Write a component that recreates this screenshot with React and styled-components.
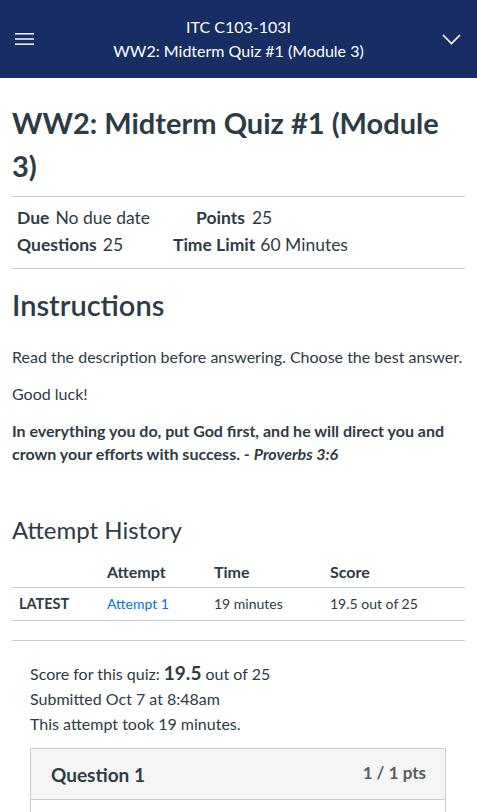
import React from "react";
import styled, { createGlobalStyle } from "styled-components";

const Global = createGlobalStyle`
  html, body { margin: 0; padding: 0; background: #fff; }
  body { font-family: Lato, "Noto Sans", sans-serif; color: #2d3b45; }
  * { box-sizing: border-box; }
`;

const TopBar = styled.header`
  height: 78px;
  background: #172d64;
  color: #fff;
  display: grid;
  grid-template-columns: 48px 1fr 48px;
  align-items: center;
`;

const IconBtn = styled.div`
  display: flex;
  align-items: center;
  justify-content: ${(p) => (p.$right ? "flex-end" : "flex-start")};
  padding: ${(p) => (p.$right ? "0 16px 0 0" : "0 0 0 15px")};
`;

const BarTitle = styled.div`
  text-align: center;
  font-size: 16px;
  line-height: 24px;
  padding-bottom: 1px;
`;

const Page = styled.main`
  padding: 0 12px;
`;

const Title = styled.h1`
  margin: 23px 0 9px;
  font-size: 29px;
  line-height: 43px;
  font-weight: 700;
`;

const Rule = styled.hr`
  border: 0;
  border-top: 1px solid #c7cdd1;
  margin: 0;
`;

const Details = styled.div`
  display: grid;
  grid-template-columns: 156px 1fr;
  row-gap: 3px;
  padding: 9px 5px 11px;
  font-size: 17.5px;
  line-height: 24px;
`;

const DetailItem = styled.div`
  display: flex;
  gap: ${(p) => p.$gap || 5}px;
  padding-left: ${(p) => p.$indent || 0}px;
`;

const DetailLabel = styled.span`
  font-weight: 700;
`;

const H2 = styled.h2`
  margin: 19px 0 23px;
  font-size: 29px;
  line-height: 34px;
  font-weight: 600;
`;

const P = styled.p`
  margin: 0 0 14px;
  font-size: 16px;
  line-height: 23px;
  font-weight: ${(p) => (p.$bold ? 700 : 400)};
`;

const H3 = styled.h3`
  margin: 50px 0 17px;
  font-size: 24px;
  line-height: 30px;
  font-weight: 400;
`;

const Table = styled.table`
  width: 100%;
  border-collapse: collapse;
  font-size: 14px;
`;

const Th = styled.th`
  text-align: left;
  font-size: 16px;
  line-height: 19px;
  font-weight: 700;
  padding: 0 0 6px;
  border-bottom: 1px solid #c7cdd1;
  width: ${(p) => p.$w || "auto"};
`;

const Td = styled.td`
  padding: 7px 0 8px;
  line-height: 17px;
  border-bottom: 1px solid #c7cdd1;
  padding-left: ${(p) => (p.$first ? "7px" : "0")};
  font-weight: ${(p) => (p.$bold ? 700 : 400)};
  font-size: ${(p) => (p.$bold ? "14.5px" : "14px")};
`;

const LinkText = styled.a`
  color: #0770e3;
  text-decoration: none;
`;

const EmptyRow = styled.div`
  height: 20px;
  border-bottom: 1px solid #c7cdd1;
`;

const Summary = styled.div`
  padding: 19px 30px 0;
  font-size: 16px;
  line-height: 25px;
`;

const Big = styled.strong`
  font-size: 19px;
`;

const QuestionBox = styled.section`
  margin: 12px 31px 0 30px;
  border: 1px solid #c7cdd1;
  border-bottom: 0;
`;

const QuestionHead = styled.div`
  background: #f5f5f5;
  border-bottom: 1px solid #c7cdd1;
  display: flex;
  justify-content: space-between;
  align-items: flex-start;
  padding: 14px 19px 0 20px;
  height: 51px;
`;

const QTitle = styled.span`
  font-size: 19px;
  line-height: 24px;
  font-weight: 700;
`;

const QPts = styled.span`
  font-size: 17px;
  line-height: 20px;
  font-weight: 700;
  color: #565e64;
`;

const QBody = styled.div`
  height: 40px;
`;

export default function App() {
  return (
    <>
      <Global />
      <TopBar>
        <IconBtn>
          <svg width="19" height="14" viewBox="0 0 19 14">
            <rect x="0" y="1" width="19" height="1.6" fill="#e8ecf4" />
            <rect x="0" y="6.2" width="19" height="1.6" fill="#e8ecf4" />
            <rect x="0" y="11.4" width="19" height="1.6" fill="#e8ecf4" />
          </svg>
        </IconBtn>
        <BarTitle>
          <div>ITC C103-103I</div>
          <div>WW2: Midterm Quiz #1 (Module 3)</div>
        </BarTitle>
        <IconBtn $right>
          <svg width="19" height="11" viewBox="0 0 19 11">
            <path d="M1 1 L9.5 9.5 L18 1" fill="none" stroke="#fff" strokeWidth="1.6" />
          </svg>
        </IconBtn>
      </TopBar>
      <Page>
        <Title>WW2: Midterm Quiz #1 (Module 3)</Title>
        <Rule />
        <Details>
          <DetailItem $gap={6}>
            <DetailLabel>Due</DetailLabel>
            <span>No due date</span>
          </DetailItem>
          <DetailItem $indent={23} $gap={7}>
            <DetailLabel>Points</DetailLabel>
            <span>25</span>
          </DetailItem>
          <DetailItem $gap={6}>
            <DetailLabel>Questions</DetailLabel>
            <span>25</span>
          </DetailItem>
          <DetailItem $gap={5}>
            <DetailLabel>Time Limit</DetailLabel>
            <span>60 Minutes</span>
          </DetailItem>
        </Details>
        <Rule />
        <H2>Instructions</H2>
        <P>Read the description before answering. Choose the best answer.</P>
        <P>Good luck!</P>
        <P $bold>
          In everything you do, put God first, and he will direct you and crown your
          efforts with success. - <em>Proverbs 3:6</em>
        </P>
        <H3>Attempt History</H3>
        <Table>
          <thead>
            <tr>
              <Th $w="95px"></Th>
              <Th $w="107px">Attempt</Th>
              <Th $w="116px">Time</Th>
              <Th>Score</Th>
            </tr>
          </thead>
          <tbody>
            <tr>
              <Td $first $bold>LATEST</Td>
              <Td><LinkText href="#">Attempt 1</LinkText></Td>
              <Td>19 minutes</Td>
              <Td>19.5 out of 25</Td>
            </tr>
          </tbody>
        </Table>
        <EmptyRow />
      </Page>
      <Summary>
        <div>
          Score for this quiz: <Big>19.5</Big> out of 25
        </div>
        <div>Submitted Oct 7 at 8:48am</div>
        <div>This attempt took 19 minutes.</div>
      </Summary>
      <QuestionBox>
        <QuestionHead>
          <QTitle>Question 1</QTitle>
          <QPts>1 / 1 pts</QPts>
        </QuestionHead>
        <QBody />
      </QuestionBox>
    </>
  );
}
